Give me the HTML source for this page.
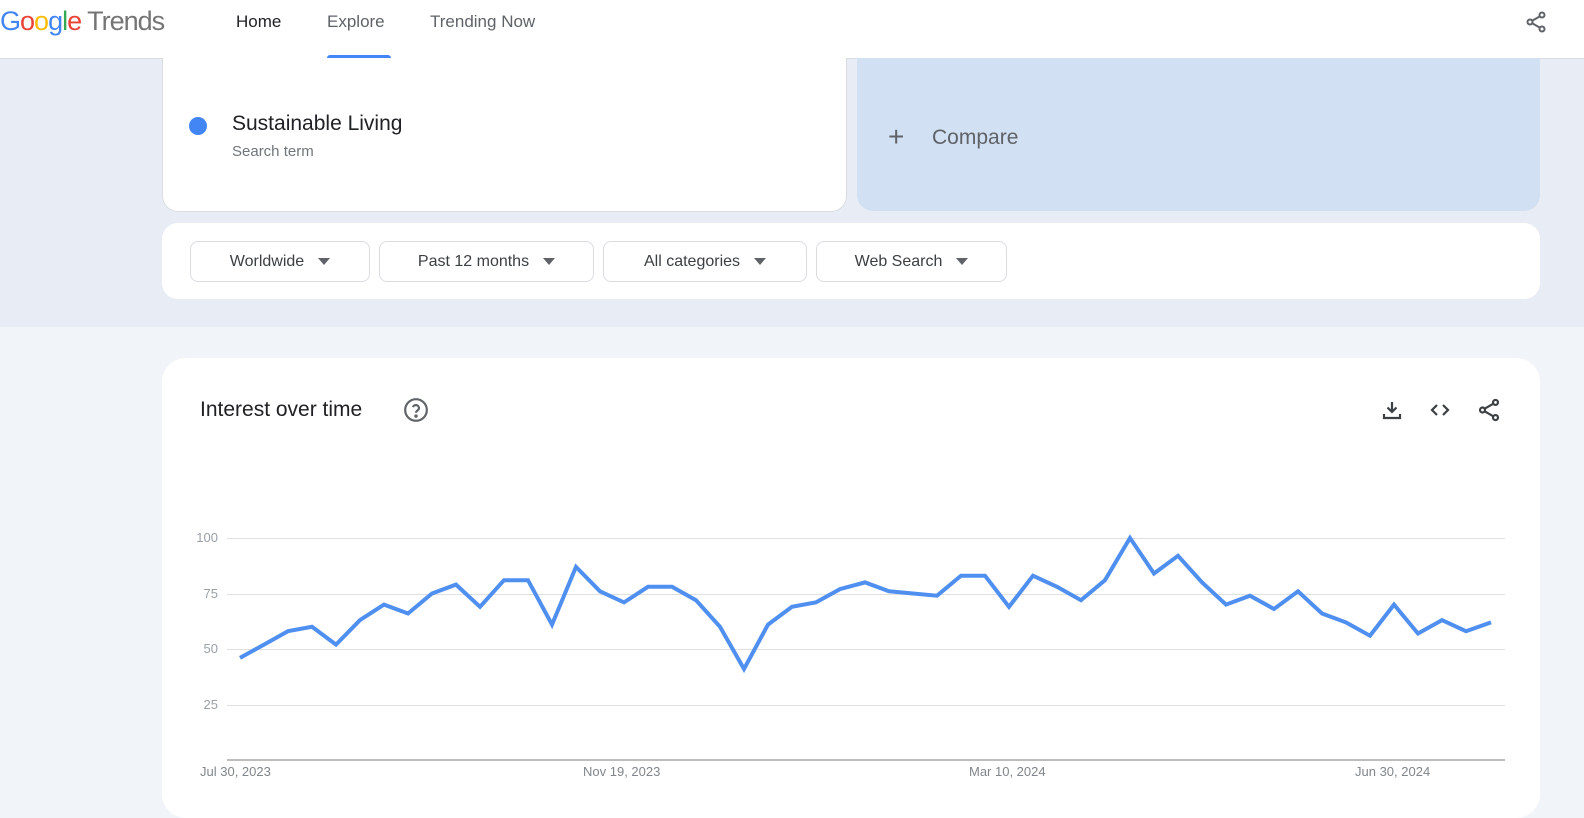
<!DOCTYPE html>
<html><head><meta charset="utf-8"><style>
*{margin:0;padding:0;box-sizing:border-box}
body{width:1584px;height:803px;overflow:hidden;background:#f1f4f9;font-family:"Liberation Sans",Arial,sans-serif;position:relative}
.hdr{position:absolute;left:0;top:0;width:1584px;height:59px;background:#fff;border-bottom:1px solid #dadce0}
.logo{position:absolute;left:0;top:6px;font-size:27px;letter-spacing:-1px}
.nav{position:absolute;top:12px;font-size:17px;color:#5f6368}
.band{position:absolute;left:0;top:59px;width:1584px;height:268px;background:#e8edf5}
.card{position:absolute;background:#fff;border:1px solid #dadce0}
.pill{position:absolute;top:241px;height:41px;border:1px solid #dadce0;border-radius:8px;background:#fff;font-size:16px;color:#3c4043;display:flex;align-items:center;justify-content:center;gap:14px}
.tri{width:0;height:0;border-left:6px solid transparent;border-right:6px solid transparent;border-top:7px solid #5f6368}
.yl{position:absolute;left:170px;width:48px;text-align:right;font-size:13px;color:#9aa0a6}
.xl{position:absolute;top:764px;font-size:13px;color:#80868b}
</style></head><body>
<div class="hdr">
 <div class="logo"><span style="color:#4285f4">G</span><span style="color:#ea4335">o</span><span style="color:#fbbc05">o</span><span style="color:#4285f4">g</span><span style="color:#34a853">l</span><span style="color:#ea4335">e</span> <span style="color:#757575">Trends</span></div>
 <div class="nav" style="left:236px;color:#202124">Home</div>
 <div class="nav" style="left:327px">Explore</div>
 <div style="position:absolute;left:327px;top:55px;width:64px;height:4px;background:#4285f4;border-radius:3px 3px 0 0"></div>
 <div class="nav" style="left:430px">Trending Now</div>
 <svg style="position:absolute;left:1524px;top:10px" width="24" height="24" viewBox="0 0 24 24" fill="none" stroke="#5f6368" stroke-width="2"><circle cx="18" cy="5" r="2.5"/><circle cx="6" cy="12" r="2.5"/><circle cx="18" cy="19" r="2.5"/><path d="M8.2 10.8l7.6-4.4M8.2 13.2l7.6 4.4"/></svg>
</div>
<div class="band"></div>
<div class="card" style="left:162px;top:58px;width:685px;height:154px;border-radius:0 0 16px 16px;border-top:none"></div>
<div style="position:absolute;left:189px;top:117px;width:18px;height:18px;border-radius:50%;background:#4285f4"></div>
<div style="position:absolute;left:232px;top:112px;font-size:21px;color:#202124">Sustainable Living</div>
<div style="position:absolute;left:232px;top:143px;font-size:15px;color:#70757a">Search term</div>
<div style="position:absolute;left:857px;top:58px;width:683px;height:153px;background:#d2e0f3;border-radius:0 0 16px 16px"></div>
<div style="position:absolute;left:888px;top:122px;font-size:28px;color:#5f6368;line-height:30px">+</div>
<div style="position:absolute;left:932px;top:126px;font-size:21px;color:#5f6368">Compare</div>
<div class="card" style="left:162px;top:223px;width:1378px;height:76px;border-radius:16px;border:none"></div>
<div class="pill" style="left:190px;width:180px">Worldwide<span class="tri"></span></div>
<div class="pill" style="left:379px;width:215px">Past 12 months<span class="tri"></span></div>
<div class="pill" style="left:603px;width:204px">All categories<span class="tri"></span></div>
<div class="pill" style="left:816px;width:191px">Web Search<span class="tri"></span></div>
<div class="card" style="left:162px;top:358px;width:1378px;height:460px;border-radius:24px;border:none"></div>
<div style="position:absolute;left:200px;top:398px;font-size:21px;color:#202124">Interest over time</div>
<svg style="position:absolute;left:403px;top:397px" width="26" height="26" viewBox="0 0 24 24" fill="none" stroke="#5f6368" stroke-width="2"><circle cx="12" cy="12" r="10"/><path d="M9.2 9.3a2.9 2.9 0 0 1 5.6 1c0 1.9-2.8 2.4-2.8 4.2"/><circle cx="12" cy="17.6" r=".6" fill="#5f6368"/></svg>
<svg style="position:absolute;left:1380px;top:398px" width="24" height="24" viewBox="0 0 24 24" fill="none" stroke="#3c4043" stroke-width="2.2"><path d="M12 4v10M7.5 9.5L12 14l4.5-4.5M4 16v4h16v-4"/></svg>
<svg style="position:absolute;left:1428px;top:398px" width="24" height="24" viewBox="0 0 24 24" fill="none" stroke="#3c4043" stroke-width="2.2"><path d="M9 7l-5 5 5 5M15 7l5 5-5 5"/></svg>
<svg style="position:absolute;left:1476px;top:397px" width="26" height="26" viewBox="0 0 24 24" fill="none" stroke="#3c4043" stroke-width="2"><circle cx="18" cy="5" r="2.3"/><circle cx="6" cy="12" r="2.3"/><circle cx="18" cy="19" r="2.3"/><path d="M8 10.8l8-4.6M8 13.2l8 4.6"/></svg>
<svg style="position:absolute;left:0;top:0" width="1584" height="803">
 <g stroke="#e0e0e0" stroke-width="1"><line x1="227" y1="538.5" x2="1505" y2="538.5"/><line x1="227" y1="594.5" x2="1505" y2="594.5"/><line x1="227" y1="649.5" x2="1505" y2="649.5"/><line x1="227" y1="705.5" x2="1505" y2="705.5"/></g>
 <line x1="227" y1="760" x2="1505" y2="760" stroke="#bdbdbd" stroke-width="2"/>
 <polyline fill="none" stroke="#4f8ff0" stroke-width="4" stroke-linejoin="miter" points="240,657.9 264,644.6 288,631.2 312,626.8 336,644.6 360,620.1 384,604.6 408,613.5 432,593.5 456,584.6 480,606.8 504,580.2 528,580.2 552,624.6 576,566.9 600,591.3 624,602.4 648,586.8 672,586.8 696,600.2 720,626.8 744,669 768,624.6 792,606.8 816,602.4 840,589.1 865,582.4 889,591.3 913,593.5 937,595.7 961,575.7 985,575.7 1009,606.8 1033,575.7 1057,586.8 1081,600.2 1105,580.2 1130,538 1154,573.5 1178,555.8 1202,582.4 1226,604.6 1250,595.7 1274,609 1298,591.3 1322,613.5 1346,622.4 1370,635.7 1394,604.6 1418,633.5 1442,620.1 1466,631.2 1491,622.4"/>
</svg>
<div class="yl" style="top:530px">100</div>
<div class="yl" style="top:586px">75</div>
<div class="yl" style="top:641px">50</div>
<div class="yl" style="top:697px">25</div>
<div class="xl" style="left:200px">Jul 30, 2023</div>
<div class="xl" style="left:583px">Nov 19, 2023</div>
<div class="xl" style="left:969px">Mar 10, 2024</div>
<div class="xl" style="left:1355px">Jun 30, 2024</div>
</body></html>
